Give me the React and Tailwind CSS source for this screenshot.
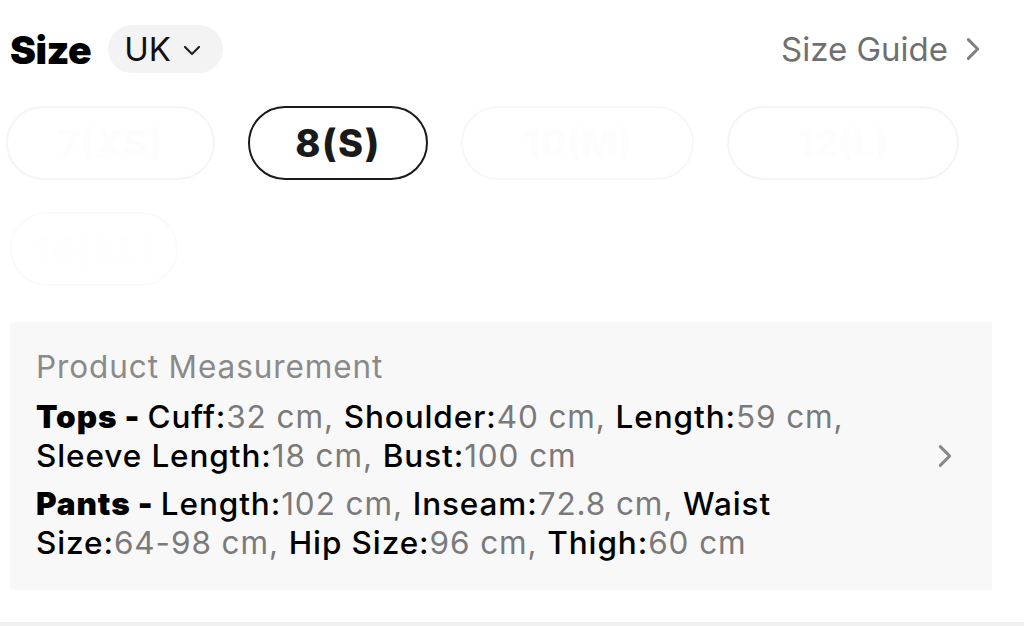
import React from "react";

const font = { fontFamily: "Inter, 'Noto Sans', 'Liberation Sans', sans-serif" };

function Chevron({ className, dir = "right", stroke = "#808080", w = 3 }) {
  const d = dir === "right" ? "M2 2 L10 10 L2 18" : "M2 2 L9 9 L16 2";
  const vb = dir === "right" ? "0 0 12 20" : "0 0 18 11";
  return (
    <svg viewBox={vb} className={className} fill="none" stroke={stroke} strokeWidth={w} strokeLinecap="round" strokeLinejoin="round">
      <path d={d} />
    </svg>
  );
}

function Item({ label, value, last }) {
  return (
    <>
      <span className="text-black font-medium">{label}:</span>
      <span className="text-[#7a7a7a]">{value}{last ? "" : ","}</span>{last ? "" : " "}
    </>
  );
}

export default function App() {
  return (
    <div style={font} className="w-[1024px] h-[626px] bg-white overflow-hidden flex flex-col relative">
      {/* header */}
      <div className="flex items-center justify-between pl-[10px] pr-[44px] pt-[25px] h-[73px]">
        <div className="flex items-center gap-[17px]">
          <span className="text-[39px] font-black text-black tracking-[-0.5px] leading-none">Size</span>
          <div className="h-[48px] w-[115px] rounded-full bg-[#f3f3f3] flex items-center pl-[16px] gap-[12px]">
            <span className="text-[33px] text-[#111] leading-none">UK</span>
            <Chevron dir="down" className="w-[18px] h-[11px] mt-[2px]" stroke="#222" w={2.2} />
          </div>
        </div>
        <div className="flex items-center gap-[18px]">
          <span className="text-[33px] text-[#707070] leading-none">Size Guide</span>
          <Chevron className="w-[14px] h-[24px]" stroke="#808080" w={2.6} />
        </div>
      </div>

      {/* sizes */}
      <div className="flex gap-[33px] pl-[6px] mt-[33px]">
        <div className="h-[74px] w-[209px] rounded-full border-[2px] border-[#f5f5f5] flex items-center justify-center text-[38px] font-extrabold text-[#fdfdfd]">7(XS)</div>
        <div className="h-[74px] w-[180px] rounded-full border-[2.5px] border-[#1a1a1a] flex items-center justify-center text-[38px] font-extrabold tracking-[1.5px] text-[#1a1a1a]">8(S)</div>
        <div className="h-[74px] w-[233px] rounded-full border-[2px] border-[#f7f7f7] flex items-center justify-center text-[38px] font-extrabold text-[#fdfdfd]">10(M)</div>
        <div className="h-[74px] w-[232px] rounded-full border-[2px] border-[#f4f4f4] flex items-center justify-center text-[38px] font-extrabold text-[#fdfdfd]">12(L)</div>
      </div>
      <div className="flex pl-[10px] mt-[32px]">
        <div className="h-[74px] w-[168px] rounded-full border-[2px] border-[#fafafa] flex items-center justify-center text-[38px] font-extrabold text-[#fefefe]">14(XL)</div>
      </div>

      {/* measurement card */}
      <div className="mt-[36px] ml-[10px] w-[982px] h-[268px] bg-[#f8f8f8] flex pl-[26px] pr-[40px]">
        <div className="w-[860px] text-[31.5px] leading-[39px] tracking-[0.9px] pt-[25px]">
          <div className="text-[#8a8a8a]">Product Measurement</div>
          <div className="mt-[11px]">
            <span className="font-black text-black">Tops - </span>
            <Item label="Cuff" value="32 cm" />
            <Item label="Shoulder" value="40 cm" />
            <Item label="Length" value="59 cm" />
            <Item label="Sleeve Length" value="18 cm" />
            <Item label="Bust" value="100 cm" last />
          </div>
          <div className="mt-[9px]">
            <span className="font-black text-black">Pants - </span>
            <Item label="Length" value="102 cm" />
            <Item label="Inseam" value="72.8 cm" />
            <Item label="Waist Size" value="64-98 cm" />
            <Item label="Hip Size" value="96 cm" />
            <Item label="Thigh" value="60 cm" last />
          </div>
        </div>
        <div className="flex-1 flex justify-end items-center">
          <Chevron className="w-[14px] h-[24px]" stroke="#888" w={2.6} />
        </div>
      </div>

      <div className="absolute left-0 right-0 bottom-0 h-[4px] bg-[#f0f0f0]" />
    </div>
  );
}
